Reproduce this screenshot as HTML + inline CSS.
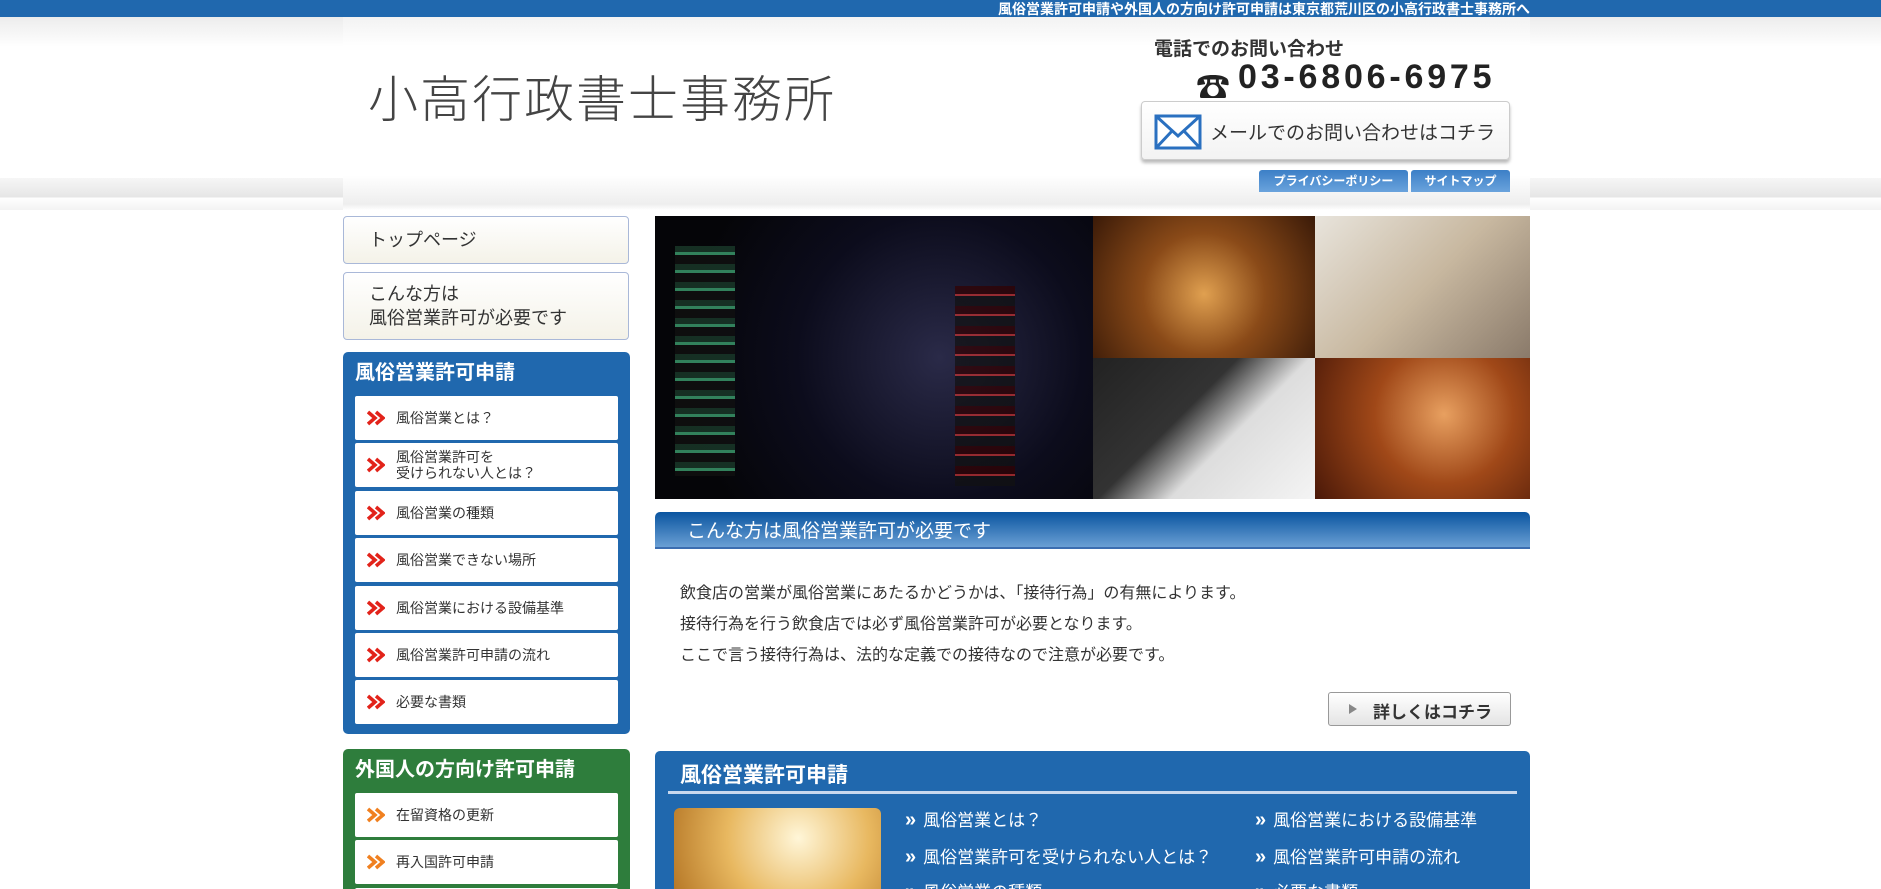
<!DOCTYPE html>
<html><head><meta charset="utf-8"><style>
*{margin:0;padding:0;box-sizing:border-box}
html,body{width:1881px;height:889px;overflow:hidden}
body{background:#fff;font-family:"Liberation Sans","Noto Sans CJK JP",sans-serif;color:#333;position:relative}
.abs{position:absolute}
#top{left:0;top:0;width:1881px;height:17px;background:#2068ae}
#top span{position:absolute;right:351px;top:-1px;color:#fff;font-weight:bold;font-size:14px;white-space:nowrap}
#band{left:0;top:178px;width:1881px;height:32px;background:linear-gradient(#f6f6f6,#e6e6e6 60%,#fff 62%,#f3f3f3)}
#hshade{left:0;top:17px;width:1881px;height:30px;background:linear-gradient(#ececec,#fff)}
#logo{left:368px;top:60px;font-size:50px;color:#444;letter-spacing:2px;font-weight:300;white-space:nowrap}
#tel1{left:1154px;top:34px;font-size:19px;font-weight:bold;color:#333}
#tel2{left:1238px;top:58px;font-size:34px;font-weight:bold;color:#222;letter-spacing:3.8px;font-family:"Liberation Sans",sans-serif}
#telic{left:1196px;top:60px;font-size:34px;color:#222}
#mail{left:1141px;top:101px;width:369px;height:59px;border:1px solid #ccc;border-radius:4px;background:linear-gradient(#fff,#f3f3f3);box-shadow:0 3px 3px #bbb;font-size:19px;color:#333;padding:16px 0 0 68px;white-space:nowrap}
.tab{top:170px;height:22px;background:linear-gradient(#3c7fc6,#6aa3dc);color:#fff;font-size:12px;font-weight:bold;text-align:center;line-height:22px;border-radius:3px 3px 0 0}
.sbtn{left:343px;width:286px;border:1px solid #a9b8d8;border-radius:4px;background:linear-gradient(#fff,#f4f2e8);font-size:18px;color:#333;padding-left:25px}
.box{left:343px;width:287px;border-radius:5px;padding:0 12px}
.box h3{color:#fff;font-size:20px;font-weight:bold;height:44px;line-height:42px;padding-left:0}
.item{height:44px;background:#fff;margin-bottom:3.4px;border-radius:2px;font-size:14px;color:#333;display:flex;align-items:center;position:relative}
.item svg{margin:0 11px 0 12px}
#hero{left:655px;top:216px;width:875px;height:283px;background:#000}
#ttl{left:655px;top:512px;width:875px;height:37px;border-radius:5px 5px 0 0;background:linear-gradient(#0a55a0,#6a9fd4);border-bottom:2px solid #3b6db0;color:#fff;font-size:19px;padding:4px 0 0 32px}
.txt{left:680px;font-size:16px;color:#333;white-space:nowrap}
#more{left:1328px;top:692px;width:183px;height:34px;border:1px solid #999;border-radius:3px;background:linear-gradient(#fff,#e4e4e4);font-weight:bold;font-size:17px;color:#333;padding:5px 0 0 44px}
#more:before{content:"";position:absolute;left:20px;top:11px;border-left:8px solid #888;border-top:5px solid transparent;border-bottom:5px solid transparent}
#sec{left:655px;top:751px;width:875px;height:138px;background:#2068ae;border-radius:5px 5px 0 0;overflow:hidden}
#sec h3{position:absolute;left:25px;top:8px;color:#fff;font-size:21px;font-weight:bold}
#sec .line{position:absolute;left:13px;top:40px;width:849px;height:3px;background:#c8d8ee}
.lk{color:#fff;font-size:17px;white-space:nowrap}
.lk b{font-size:20px;margin-right:10px;letter-spacing:-3px}
</style></head><body>
<div class="abs" id="top"><span>風俗営業許可申請や外国人の方向け許可申請は東京都荒川区の小高行政書士事務所へ</span></div>
<div class="abs" id="hshade"></div>
<div class="abs" id="band"></div>
<div class="abs" style="left:343px;top:17px;width:1187px;height:193px;background:linear-gradient(#f2f2f2,#fff 15%,#fff 82%,#eee 97%,#fff)"></div>
<div class="abs" id="logo">小高行政書士事務所</div>
<div class="abs" id="tel1">電話でのお問い合わせ</div>
<div class="abs" id="telic">☎</div>
<div class="abs" id="tel2">03-6806-6975</div>
<div class="abs" id="mail">メールでのお問い合わせはコチラ
<svg style="position:absolute;left:12px;top:10px" width="48" height="40" viewBox="0 0 48 40"><rect x="2" y="4" width="44" height="32" fill="#fff" stroke="#2a70c0" stroke-width="3"/><path d="M2 4 L24 24 L46 4 M2 36 L18 19 M46 36 L30 19" fill="none" stroke="#2a70c0" stroke-width="3"/></svg></div>
<div class="abs tab" style="left:1259px;width:149px">プライバシーポリシー</div>
<div class="abs tab" style="left:1411px;width:99px">サイトマップ</div>

<div class="abs sbtn" style="top:216px;height:48px;line-height:46px">トップページ</div>
<div class="abs sbtn" style="top:272px;height:68px;padding-top:9px;line-height:24px">こんな方は<br>風俗営業許可が必要です</div>

<svg width="0" height="0" style="position:absolute"><defs><g id="chv"><path d="M1 2 L8 8 L1 14 M9 2 L16 8 L9 14" fill="none" stroke-width="3.5"/></g></defs></svg>
<div class="abs box" style="top:352px;height:382px;background:#2068ae">
<h3>風俗営業許可申請</h3>
<div class="item"><svg width="18" height="16"><use href="#chv" stroke="#e2231a"/></svg>風俗営業とは？</div>
<div class="item" style="line-height:16px"><svg width="18" height="16"><use href="#chv" stroke="#e2231a"/></svg>風俗営業許可を<br>受けられない人とは？</div>
<div class="item"><svg width="18" height="16"><use href="#chv" stroke="#e2231a"/></svg>風俗営業の種類</div>
<div class="item"><svg width="18" height="16"><use href="#chv" stroke="#e2231a"/></svg>風俗営業できない場所</div>
<div class="item"><svg width="18" height="16"><use href="#chv" stroke="#e2231a"/></svg>風俗営業における設備基準</div>
<div class="item"><svg width="18" height="16"><use href="#chv" stroke="#e2231a"/></svg>風俗営業許可申請の流れ</div>
<div class="item"><svg width="18" height="16"><use href="#chv" stroke="#e2231a"/></svg>必要な書類</div>
</div>
<div class="abs box" style="top:749px;height:160px;background:#2e7d3c">
<h3>外国人の方向け許可申請</h3>
<div class="item"><svg width="18" height="16"><use href="#chv" stroke="#f08020"/></svg>在留資格の更新</div>
<div class="item"><svg width="18" height="16"><use href="#chv" stroke="#f08020"/></svg>再入国許可申請</div>
<div class="item"></div>
</div>

<div class="abs" id="hero">
<div class="abs" style="left:0;top:0;width:438px;height:283px;background:radial-gradient(circle at 65% 50%,#2a2a48 0,#0c0c1c 45%,#050508 80%)"></div>
<div class="abs" style="left:20px;top:30px;width:60px;height:230px;background:repeating-linear-gradient(#1a3a2a 0 6px,#3da070 6px 9px,#101010 9px 18px);opacity:.8"></div>
<div class="abs" style="left:300px;top:70px;width:60px;height:200px;background:repeating-linear-gradient(#300 0 8px,#c33 8px 10px,#111 10px 20px);opacity:.7"></div>
<div class="abs" style="left:438px;top:0;width:222px;height:142px;background:radial-gradient(circle at 50% 55%,#e0a050,#8a4a18 45%,#3a1a08)"></div>
<div class="abs" style="left:660px;top:0;width:215px;height:142px;background:linear-gradient(135deg,#e8e4dc,#c8b8a0 50%,#8a7a6a)"></div>
<div class="abs" style="left:438px;top:142px;width:222px;height:141px;background:linear-gradient(135deg,#222 0,#333 40%,#ddd 60%,#f4f4f4)"></div>
<div class="abs" style="left:660px;top:142px;width:215px;height:141px;background:radial-gradient(circle at 60% 40%,#e8a060,#a04818 45%,#4a1808)"></div>
</div>
<div class="abs" id="ttl">こんな方は風俗営業許可が必要です</div>
<div class="abs txt" style="top:579px">飲食店の営業が風俗営業にあたるかどうかは、「接待行為」の有無によります。</div>
<div class="abs txt" style="top:610px">接待行為を行う飲食店では必ず風俗営業許可が必要となります。</div>
<div class="abs txt" style="top:641px">ここで言う接待行為は、法的な定義での接待なので注意が必要です。</div>
<div class="abs" id="more">詳しくはコチラ</div>

<div class="abs" id="sec"><h3>風俗営業許可申請</h3><div class="line"></div>
<div class="abs" style="left:19px;top:57px;width:207px;height:100px;border-radius:6px;background:radial-gradient(circle at 60% 30%,#fff6d8,#e8b860 50%,#b07020)"></div>
<div class="abs lk" style="left:250px;top:55px"><b>»</b>風俗営業とは？</div>
<div class="abs lk" style="left:600px;top:55px"><b>»</b>風俗営業における設備基準</div>
<div class="abs lk" style="left:250px;top:92px"><b>»</b>風俗営業許可を受けられない人とは？</div>
<div class="abs lk" style="left:600px;top:92px"><b>»</b>風俗営業許可申請の流れ</div>
<div class="abs lk" style="left:250px;top:127px"><b>»</b>風俗営業の種類</div>
<div class="abs lk" style="left:600px;top:127px"><b>»</b>必要な書類</div>
</div>
</body></html>
